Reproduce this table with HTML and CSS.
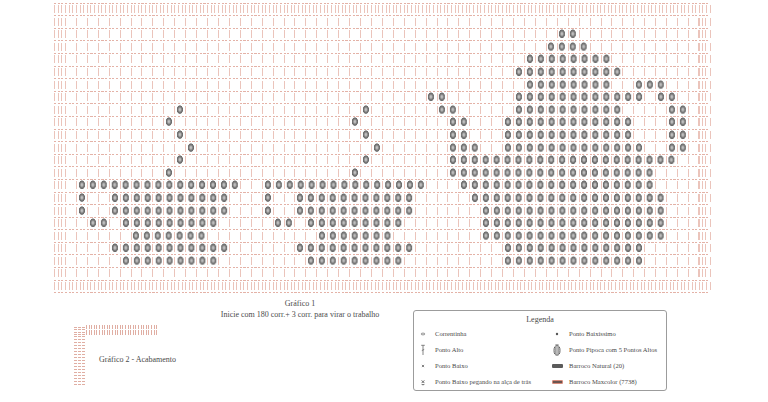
FILE: index.html
```html
<!DOCTYPE html>
<html lang="pt">
<head>
<meta charset="utf-8">
<title>Gráfico</title>
<link rel="stylesheet" href="styles.css">
</head>
<body>
<div class="chart">
  <div class="row solid"></div>
  <div class="row"><i class="b"></i><i class="b e"></i></div>
  <div class="row"><i class="b"></i><i class="p" style="--s:47;--n:2"></i><i class="b e"></i></div>
  <div class="row"><i class="b"></i><i class="p" style="--s:46;--n:4"></i><i class="b e"></i></div>
  <div class="row"><i class="b"></i><i class="p" style="--s:44;--n:8"></i><i class="b e"></i></div>
  <div class="row"><i class="b"></i><i class="p" style="--s:43;--n:10"></i><i class="b e"></i></div>
  <div class="row"><i class="b"></i><i class="p" style="--s:44;--n:8"></i><i class="p" style="--s:54;--n:3"></i><i class="b e"></i></div>
  <div class="row"><i class="b"></i><i class="p" style="--s:35;--n:2"></i><i class="p" style="--s:43;--n:12"></i><i class="p" style="--s:56;--n:2"></i><i class="b e"></i></div>
  <div class="row"><i class="b"></i><i class="p" style="--s:12;--n:1"></i><i class="p" style="--s:29;--n:1"></i><i class="p" style="--s:36;--n:2"></i><i class="p" style="--s:43;--n:10"></i><i class="p" style="--s:57;--n:2"></i><i class="b e"></i></div>
  <div class="row"><i class="b"></i><i class="p" style="--s:11;--n:1"></i><i class="p" style="--s:28;--n:1"></i><i class="p" style="--s:37;--n:2"></i><i class="p" style="--s:42;--n:12"></i><i class="p" style="--s:57;--n:2"></i><i class="b e"></i></div>
  <div class="row"><i class="b"></i><i class="p" style="--s:12;--n:1"></i><i class="p" style="--s:29;--n:1"></i><i class="p" style="--s:37;--n:2"></i><i class="p" style="--s:42;--n:12"></i><i class="p" style="--s:57;--n:2"></i><i class="b e"></i></div>
  <div class="row"><i class="b"></i><i class="p" style="--s:13;--n:1"></i><i class="p" style="--s:30;--n:1"></i><i class="p" style="--s:37;--n:3"></i><i class="p" style="--s:42;--n:13"></i><i class="p" style="--s:57;--n:2"></i><i class="b e"></i></div>
  <div class="row"><i class="b"></i><i class="p" style="--s:12;--n:1"></i><i class="p" style="--s:29;--n:1"></i><i class="p" style="--s:37;--n:21"></i><i class="b e"></i></div>
  <div class="row"><i class="b"></i><i class="p" style="--s:11;--n:1"></i><i class="p" style="--s:28;--n:1"></i><i class="p" style="--s:37;--n:19"></i><i class="b e"></i></div>
  <div class="row"><i class="b"></i><i class="p" style="--s:3;--n:15"></i><i class="p" style="--s:20;--n:15"></i><i class="p" style="--s:38;--n:18"></i><i class="b e"></i></div>
  <div class="row"><i class="b"></i><i class="p" style="--s:3;--n:1"></i><i class="p" style="--s:6;--n:11"></i><i class="p" style="--s:20;--n:1"></i><i class="p" style="--s:23;--n:11"></i><i class="p" style="--s:39;--n:18"></i><i class="b e"></i></div>
  <div class="row"><i class="b"></i><i class="p" style="--s:3;--n:1"></i><i class="p" style="--s:6;--n:11"></i><i class="p" style="--s:20;--n:1"></i><i class="p" style="--s:23;--n:11"></i><i class="p" style="--s:40;--n:17"></i><i class="b e"></i></div>
  <div class="row"><i class="b"></i><i class="p" style="--s:4;--n:2"></i><i class="p" style="--s:7;--n:9"></i><i class="p" style="--s:21;--n:2"></i><i class="p" style="--s:24;--n:9"></i><i class="p" style="--s:40;--n:17"></i><i class="b e"></i></div>
  <div class="row"><i class="b"></i><i class="p" style="--s:8;--n:7"></i><i class="p" style="--s:25;--n:7"></i><i class="p" style="--s:40;--n:17"></i><i class="b e"></i></div>
  <div class="row"><i class="b"></i><i class="p" style="--s:6;--n:11"></i><i class="p" style="--s:23;--n:11"></i><i class="p" style="--s:42;--n:13"></i><i class="b e"></i></div>
  <div class="row"><i class="b"></i><i class="p" style="--s:7;--n:9"></i><i class="p" style="--s:24;--n:9"></i><i class="p" style="--s:42;--n:13"></i><i class="b e"></i></div>
  <div class="row"><i class="b"></i><i class="b e"></i></div>
  <div class="row solid"></div>
  <div class="base"></div>
</div>

<div class="lower">
  <div class="left">
    <div class="caption">Gráfico 1<br>Inicie com 180 corr.+ 3 corr. para virar o trabalho</div>
    <div class="g2">
      <div class="corner"></div>
      <div class="top"></div>
      <div class="side"></div>
      <div class="g2-label">Gráfico 2 - Acabamento</div>
    </div>
  </div>

  <div class="legend">
    <div class="lg-title">Legenda</div>
    <div class="lg-items">
      <div class="item">
        <span class="sym"><svg width="12" height="12" viewBox="0 0 12 12"><ellipse cx="6" cy="6" rx="1.9" ry="0.9" fill="none" stroke="#777" stroke-width="0.8"/></svg></span>
        <span>Correntinha</span>
      </div>
      <div class="item">
        <span class="sym"><svg width="12" height="12" viewBox="0 0 12 12"><circle cx="6" cy="6" r="1.2" fill="#555"/></svg></span>
        <span>Ponto Baixíssimo</span>
      </div>
      <div class="item">
        <span class="sym"><svg width="12" height="12" viewBox="0 0 12 12"><path d="M4.2 1.3H7.8M6 1.3V11M4.8 6.6L7.2 5.4" fill="none" stroke="#666" stroke-width="0.8"/></svg></span>
        <span>Ponto Alto</span>
      </div>
      <div class="item">
        <span class="sym"><svg width="12" height="14" viewBox="0 0 12 14"><ellipse cx="6" cy="7.4" rx="3" ry="4.8" fill="#e6e6e6" stroke="#555" stroke-width="0.9"/><path d="M4.6 4V11M6 3.2V11.8M7.4 4V11M4.4 1.6H7.6" fill="none" stroke="#666" stroke-width="0.6"/></svg></span>
        <span>Ponto Pipoca com 5 Pontos Altos</span>
      </div>
      <div class="item">
        <span class="sym"><svg width="12" height="12" viewBox="0 0 12 12"><path d="M4.9 4.9L7.1 7.1M7.1 4.9L4.9 7.1" fill="none" stroke="#666" stroke-width="0.8"/></svg></span>
        <span>Ponto Baixo</span>
      </div>
      <div class="item">
        <span class="sym"><span class="sw"></span></span>
        <span>Barroco Natural (20)</span>
      </div>
      <div class="item">
        <span class="sym"><svg width="12" height="12" viewBox="0 0 12 12"><path d="M4.7 4.4L7.3 7M7.3 4.4L4.7 7M4.6 8.3Q6 9.4 7.4 8.3" fill="none" stroke="#555" stroke-width="0.9"/></svg></span>
        <span>Ponto Baixo pegando na alça de trás</span>
      </div>
      <div class="item">
        <span class="sym"><span class="sw mx"></span></span>
        <span>Barroco Maxcolor (7738)</span>
      </div>
    </div>
  </div>
</div>
</body>
</html>
```
FILE: styles.css
```css
html, body {
  margin: 0;
  padding: 0;
  background: #fff;
}
body {
  width: 768px;
  height: 402px;
  overflow: hidden;
  font-family: "Liberation Serif", "Times New Roman", serif;
  color: #4a4a4a;
}

/* ---------- Gráfico 1 ---------- */
.chart {
  --stem: #ebc4bb;
  --dash: #e4b2a7;
  width: 657px;
  margin: 2px 0 0 54px;
}
.row {
  display: grid;
  grid-template-columns: repeat(60, 10.93px);
  height: 12.6px;
  background-image:
    repeating-linear-gradient(90deg, var(--dash) 0 2.2px, transparent 2.2px 3.643px),
    repeating-linear-gradient(90deg, var(--stem) 0 1px, transparent 1px 10.93px);
  background-size: 656px 1.4px, 657px 8px;
  background-position: 0 0.6px, 0 3px;
  background-repeat: no-repeat;
}
.row.solid {
  background-image:
    repeating-linear-gradient(90deg, var(--dash) 0 2.2px, transparent 2.2px 3.643px),
    repeating-linear-gradient(90deg, var(--stem) 0 1px, transparent 1px 3.643px);
}
.row > i {
  display: block;
  grid-row: 1;
}
.row .b {
  grid-column: 1;
  background: repeating-linear-gradient(90deg, var(--stem) 0 1px, transparent 1px 3.643px) 0 3px / 10.93px 8px no-repeat;
}
.row .b.e {
  grid-column: 60;
}
.row .p {
  grid-column: var(--s) / span var(--n);
  background: radial-gradient(ellipse 3.4px 4.6px at 5.9px 6.6px, #cfcfcf 0, #b0b0b0 30%, #7a7a7a 58%, #6a6a6a 82%, rgba(106,106,106,0) 100%) 0 0 / 10.93px 12.6px repeat-x;
}
.base {
  height: 3px;
  background: repeating-linear-gradient(90deg, var(--dash) 0 2.2px, transparent 2.2px 3.643px) 0 0.6px / 656px 1.4px no-repeat;
}

/* ---------- lower area ---------- */
.lower {
  display: flex;
  align-items: flex-start;
}
.left {
  width: 413px;
  flex: none;
}
.caption {
  width: 200px;
  margin: 4.5px 0 0 200px;
  font-size: 8px;
  line-height: 10.5px;
  text-align: center;
}

.g2 {
  display: grid;
  grid-template-columns: 12px 71px;
  grid-template-rows: 10px 50px;
  margin: 4.5px 0 0 74px;
}
.g2 .corner {
  grid-column: 1;
  grid-row: 1;
  background:
    repeating-linear-gradient(90deg, transparent 0 3px, #fff 3px 4px),
    repeating-linear-gradient(0deg, #d99a8d 0 1px, transparent 1px 2.5px);
  opacity: 0.8;
}
.g2 .top {
  grid-column: 2;
  grid-row: 1;
  background:
    linear-gradient(#fff, #fff) 0 4.5px / 100% 1px no-repeat,
    repeating-linear-gradient(90deg, #d99a8d 0 1px, transparent 1px 2.6px);
  opacity: 0.8;
}
.g2 .side {
  grid-column: 1;
  grid-row: 2;
  background:
    repeating-linear-gradient(90deg, transparent 0 3.2px, #fff 3.2px 4px),
    repeating-linear-gradient(0deg, #d99a8d 0 1px, transparent 1px 3px);
  opacity: 0.8;
}
.g2-label {
  grid-column: 2;
  grid-row: 2;
  align-self: center;
  padding-left: 13px;
  font-size: 8px;
  line-height: 10px;
  white-space: nowrap;
}

/* ---------- Legenda ---------- */
.legend {
  flex: none;
  width: 254px;
  height: 81px;
  box-sizing: border-box;
  margin-top: 15px;
  padding: 3px 0 0 3px;
  border: 1px solid #9c9c9c;
  border-radius: 3px;
}
.lg-title {
  font-size: 8px;
  line-height: 12px;
  text-align: center;
  padding-right: 3px;
}
.lg-items {
  display: grid;
  grid-template-columns: 134px 1fr;
  grid-auto-rows: 16px;
}
.item {
  display: grid;
  grid-template-columns: 12px auto;
  column-gap: 6px;
  align-items: center;
  font-size: 6.6px;
  white-space: nowrap;
}
.sym {
  display: flex;
  align-items: center;
  justify-content: center;
}
.sym svg {
  display: block;
}
.sw {
  display: block;
  width: 11px;
  height: 4px;
  border-radius: 1px;
  background: #5b5b5b;
}
.sw.mx {
  box-sizing: border-box;
  border: 1px solid #d78b7b;
  background: #6a5550;
}
```
